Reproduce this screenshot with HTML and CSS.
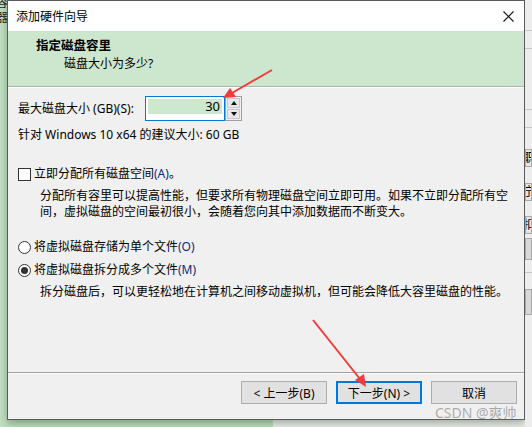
FILE: index.html
```html
<!DOCTYPE html>
<html>
<head>
  <title>添加硬件向导</title>
  <meta name="viewport" content="width=device-width, initial-scale=1">
  <link rel="stylesheet" href="styles.css">
</head>
<body>

  <div class="desk">
    <div class="side-left">
      <span>容</span>
      <span>器</span>
    </div>

    <div class="wizard">
      <div class="titlebar">
        <span>添加硬件向导</span>
        <svg class="close" width="11" height="11" viewBox="0 0 11 11">
          <path d="M0.5 0.5 L10.5 10.5 M10.5 0.5 L0.5 10.5" stroke="#111" stroke-width="1.1" fill="none"/>
        </svg>
      </div>

      <div class="banner">
        <div class="banner-title">指定磁盘容里</div>
        <div class="banner-sub">磁盘大小为多少?</div>
      </div>

      <div class="content">
        <div class="size-row">
          <label class="size-label">最大磁盘大小 (GB)(S):</label>
          <div class="spin-field">
            <div class="spin-input"><span class="sel">30</span></div>
            <div class="spin-btns">
              <div class="spin-btn"><span class="tri-up"></span></div>
              <div class="spin-btn"><span class="tri-down"></span></div>
            </div>
          </div>
        </div>
        <p class="hint">针对 Windows 10 x64 的建议大小: 60 GB</p>

        <div class="opt opt-check">
          <span class="checkbox"></span>立即分配所有磁盘空间<span class="key">(A)</span>。
        </div>
        <p class="note">分配所有容里可以提高性能，但要求所有物理磁盘空间立即可用。如果不立即分配所有空<br>间，虚拟磁盘的空间最初很小，会随着您向其中添加数据而不断变大。</p>

        <div class="opt opt-radio1">
          <span class="radio"></span>将虚拟磁盘存储为单个文件<span class="key">(O)</span>
        </div>
        <div class="opt opt-radio2">
          <span class="radio checked"></span>将虚拟磁盘拆分成多个文件<span class="key">(M)</span>
        </div>
        <p class="note">拆分磁盘后，可以更轻松地在计算机之间移动虚拟机，但可能会降低大容里磁盘的性能。</p>
      </div>

      <div class="footer">
        <button class="btn">&lt; 上一步(B)</button>
        <button class="btn btn-default">下一步(N) &gt;</button>
        <button class="btn">取消</button>
      </div>
    </div>

    <div class="side-right">
      <div class="strip-line" style="height:30px"></div>
      <div class="strip-line" style="height:17px"></div>
      <div class="strip-line" style="height:60px"></div>
      <div class="strip-line" style="height:17px"></div>
      <div class="strip-box" style="margin-top:21px">职</div>
      <div class="strip-box" style="margin-top:16px">宁</div>
      <div class="strip-box" style="margin-top:15px">扣</div>
      <div class="strip-box strip-dark" style="margin-top:4px"></div>
      <div class="strip-line" style="height:12px"></div>
      <div class="strip-box strip-dark" style="margin-top:16px;height:24px"></div>
    </div>
  </div>

  <!-- red marks drawn over the dialog -->
  <svg class="marks" width="532" height="427" viewBox="0 0 532 427">
    <line x1="272" y1="70" x2="232" y2="93" stroke="#f23b3b" stroke-width="2"/>
    <polygon points="223,98 230,88 236,97" fill="#f23b3b"/>
    <line x1="313" y1="320" x2="360" y2="379" stroke="#f23b3b" stroke-width="2"/>
    <polygon points="366,387 355,380 364,374" fill="#f23b3b"/>
  </svg>

  <div class="watermark">CSDN @爽帅_</div>

</body>
</html>
```

FILE: styles.css
```css
body {
  margin: 0;
  width: 532px;
  height: 427px;
  overflow: hidden;
  font-family: "Noto Sans", "Noto Sans CJK SC", sans-serif;
  font-size: 12px;
  color: #000;
  background: linear-gradient(to right, #bfddbf 273px, #ededed 273px);
}
.desk {
  display: flex;
  align-items: flex-start;
  height: 427px;
}
.side-left {
  width: 7px;
  height: 427px;
  overflow: hidden;
  display: flex;
  flex-direction: column;
  font-size: 12px;
  line-height: 15px;
  color: #222;
  background: #c3e0c3;
}
.side-left span {
  margin-left: -4px;
}
.side-left span:first-child {
  margin-top: -5px;
}
.wizard {
  width: 518px;
  height: 420px;
  flex-shrink: 0;
  box-sizing: border-box;
  border: 1px solid #5a5a5a;
  background: #f0f0f0;
  display: flex;
  flex-direction: column;
  box-shadow: 0 3px 8px rgba(0, 40, 0, 0.35);
}
.titlebar {
  height: 30px;
  flex-shrink: 0;
  background: #fff;
  display: flex;
  align-items: center;
  justify-content: space-between;
  padding: 0 10px 0 8px;
  font-size: 12px;
}
.banner {
  height: 56px;
  flex-shrink: 0;
  background: #cde6ce;
  border-bottom: 1px solid #a8b8a8;
  box-shadow: 0 1px 0 #fff;
  box-sizing: border-box;
  padding-top: 6px;
  line-height: 18px;
}
.banner-title {
  padding-left: 28px;
  font-weight: bold;
  font-size: 12.5px;
}
.banner-sub {
  padding-left: 56px;
  font-size: 12px;
}
.content {
  flex: 1;
  padding: 9px 0 0 10px;
  line-height: 16px;
  white-space: nowrap;
}
.size-row {
  display: flex;
  align-items: center;
  height: 25px;
}
.size-label {
  width: 127px;
}
.spin-field {
  display: flex;
  height: 25px;
}
.spin-input {
  width: 80px;
  box-sizing: border-box;
  border: 1px solid #0078d7;
  background: #fff;
  padding: 2px 2px 6px 2px;
  display: flex;
}
.sel {
  flex: 1;
  background: #cce8cf;
  text-align: right;
  padding-right: 2px;
  font-size: 13px;
  line-height: 15px;
}
.spin-btns {
  width: 17px;
  box-sizing: border-box;
  border: 1px solid #a0a0a0;
  background: #f0f0f0;
  display: flex;
  flex-direction: column;
  gap: 1px;
  padding: 1px;
}
.spin-btn {
  flex: 1;
  background: #e8e8e8;
  border: 1px solid #c8c8c8;
  display: flex;
  align-items: center;
  justify-content: center;
}
.tri-up {
  border-left: 3px solid transparent;
  border-right: 3px solid transparent;
  border-bottom: 4px solid #111;
}
.tri-down {
  border-left: 3px solid transparent;
  border-right: 3px solid transparent;
  border-top: 4px solid #111;
}
.hint {
  margin: 6px 0 0;
}
.opt {
  display: flex;
  align-items: center;
  height: 16px;
}
.opt-check {
  margin-top: 23px;
}
.opt-radio1 {
  margin-top: 19px;
}
.opt-radio2 {
  margin-top: 7px;
}
.key {
  color: #0b2a7a;
}
.checkbox {
  width: 13px;
  height: 13px;
  box-sizing: border-box;
  border: 1px solid #333;
  background: #fff;
  margin-right: 3px;
}
.radio {
  width: 13px;
  height: 13px;
  box-sizing: border-box;
  border: 1px solid #333;
  border-radius: 50%;
  background: #fff;
  margin-right: 3px;
  display: flex;
  align-items: center;
  justify-content: center;
}
.radio.checked::after {
  content: "";
  width: 7px;
  height: 7px;
  border-radius: 50%;
  background: #333;
}
.note {
  margin: 6px 0 0;
  padding-left: 22px;
}
.footer {
  height: 38px;
  flex-shrink: 0;
  border-top: 1px solid #a0a0a0;
  box-shadow: inset 0 1px 0 #fff;
  display: flex;
  justify-content: flex-end;
  align-items: flex-start;
  gap: 9px;
  padding: 8px 7px 0 0;
}
.btn {
  width: 86px;
  height: 23px;
  box-sizing: border-box;
  border: 1px solid #adadad;
  background: #e1e1e1;
  font-family: "Noto Sans", "Noto Sans CJK SC", sans-serif;
  font-size: 12px;
  padding: 0;
}
.btn-default {
  border: 2px solid #0078d7;
}
.side-right {
  flex: 1;
  height: 427px;
  overflow: hidden;
  background: #ededed;
  font-size: 12px;
}
.strip-line {
  border-bottom: 1px solid #c8c8c8;
}
.strip-box {
  height: 16px;
  border: 1px solid #a8a8a8;
  background: #e6e6e6;
  line-height: 16px;
  text-indent: -3px;
  overflow: hidden;
}
.strip-dark {
  height: 20px;
  background: #d8d8d8;
}
.marks {
  position: absolute;
  left: 0;
  top: 0;
  pointer-events: none;
}
.watermark {
  position: absolute;
  left: 435px;
  top: 402px;
  font-size: 14px;
  color: rgba(110, 110, 110, 0.55);
}
```
